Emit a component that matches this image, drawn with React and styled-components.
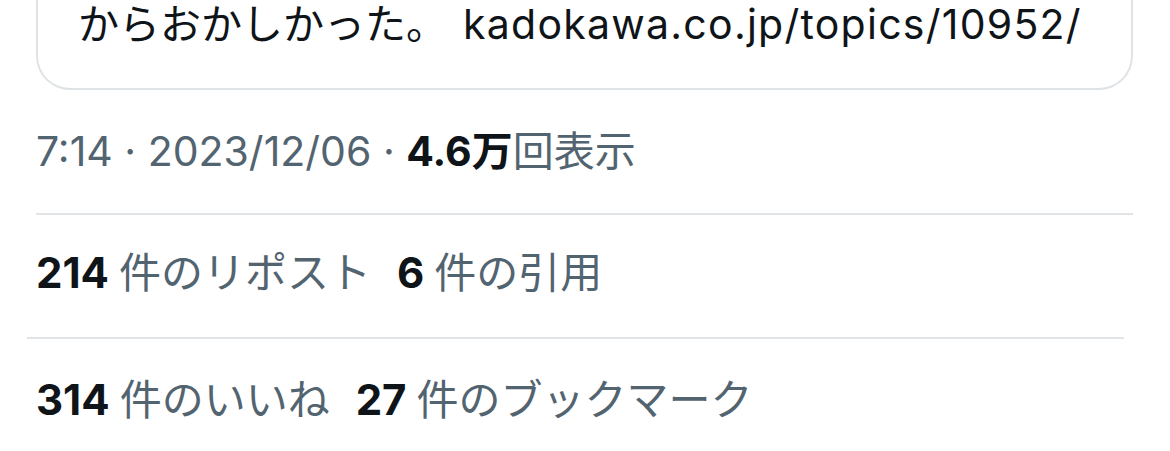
import React from 'react';
import styled, { createGlobalStyle } from 'styled-components';

const GlobalStyle = createGlobalStyle`
    body {
        margin: 0;
        background: #fff;
        font-family: Inter, "Noto Sans CJK JP", sans-serif;
        -webkit-font-smoothing: antialiased;
    }
`;

const Page = styled.div`
    padding: 0 37px 0 36px;
    overflow: hidden;
`;

const Card = styled.div`
    border: 2px solid #dfe3e6;
    border-top: none;
    border-radius: 0 0 34px 34px;
    padding: 0 40px 40px 40px;
    color: #0f1419;
    font-size: 41px;
    line-height: 48px;
    white-space: nowrap;
`;

const Link = styled.span`
    margin-left: 16px;
    letter-spacing: 1.25px;
`;

const Meta = styled.div`
    margin-top: 37px;
    padding-bottom: 38px;
    font-size: 41px;
    line-height: 48px;
    color: #536471;
    white-space: nowrap;
`;

const Strong = styled.span`
    color: #0f1419;
    font-weight: 700;
`;

const Divider = styled.div`
    border-top: 2px solid #e1e5e8;
    margin-left: ${({ shift }) => (shift ? `-${shift}px` : '0')};
    margin-right: ${({ shift }) => (shift ? `${shift}px` : '0')};
`;

const StatRow = styled.div`
    display: flex;
    gap: 26px;
    padding: ${({ pad }) => pad};
    font-size: 42px;
    line-height: 48px;
    white-space: nowrap;
`;

const Stat = styled.div`
    display: flex;
    align-items: baseline;
    gap: 10px;
`;

const Count = styled.span`
    color: #0f1419;
    font-weight: 700;
`;

const Label = styled.span`
    color: #536471;
`;

const stats = [
    [
        { count: '214', label: '件のリポスト' },
        { count: '6', label: '件の引用' },
    ],
    [
        { count: '314', label: '件のいいね' },
        { count: '27', label: '件のブックマーク' },
    ],
];

const App = () => {
    return (
        <Page>
            <GlobalStyle />
            <Card>
                からおかしかった。<Link>kadokawa.co.jp/topics/10952/</Link>
            </Card>
            <Meta>
                7:14 · 2023/12/06 · <Strong>4.6万</Strong>回表示
            </Meta>
            <Divider />
            <StatRow pad="34px 0 40px">
                {stats[0].map((s) => (
                    <Stat key={s.label}>
                        <Count>{s.count}</Count>
                        <Label>{s.label}</Label>
                    </Stat>
                ))}
            </StatRow>
            <Divider shift={9} />
            <StatRow pad="37px 0">
                {stats[1].map((s) => (
                    <Stat key={s.label}>
                        <Count>{s.count}</Count>
                        <Label>{s.label}</Label>
                    </Stat>
                ))}
            </StatRow>
        </Page>
    );
};

export default App;
